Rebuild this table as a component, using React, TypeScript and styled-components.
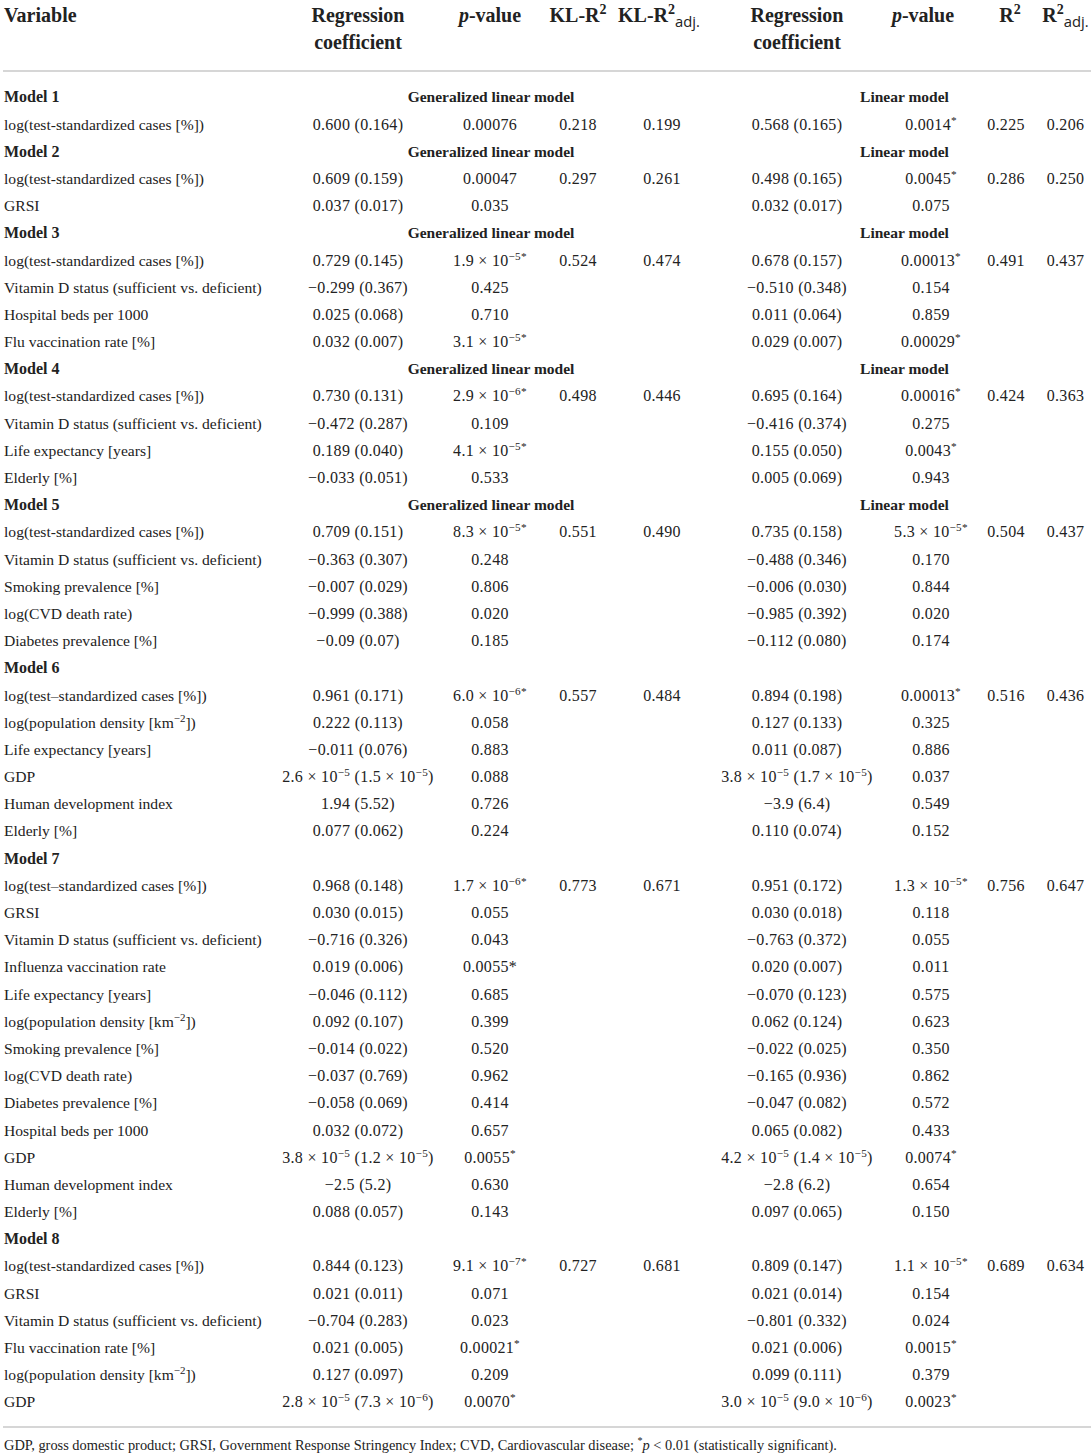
import React from "react"
import styled, { createGlobalStyle } from "styled-components"

const GlobalStyle = createGlobalStyle`
    html, body {
        margin: 0;
        padding: 0;
        background: #ffffff;
    }
`

const COLUMNS = "269px 172px 92px 84px 84px 186px 82px 68px 51px"
const SERIF = `"Liberation Serif", "Times New Roman", serif`

const Table = styled.div`
    width: 1091px;
    font-family: ${SERIF};
    color: #222222;
`

const HeaderRow = styled.div`
    display: grid;
    grid-template-columns: ${COLUMNS};
    padding-top: 2px;
    height: 72px;
    box-sizing: border-box;
    margin-left: 3px;
    border-bottom: 2px solid #d6d6d6;
`

// $nudge moves a centred heading sideways (px, negative = left)
const HeadCell = styled.div<{ $left?: boolean; $nudge?: number }>`
    font-size: 20px;
    font-weight: bold;
    line-height: 27px;
    white-space: nowrap;
    text-align: center;
    justify-self: ${(p) => (p.$left ? "start" : "center")};
    padding-left: ${(p) => (p.$left ? "1px" : "0")};
    margin-left: ${(p) => Math.max(0, (p.$nudge || 0) * 2)}px;
    margin-right: ${(p) => Math.max(0, -(p.$nudge || 0) * 2)}px;

    i {
        font-style: italic;
    }
`

const Sup = styled.sup`
    font-size: 0.7em;
    line-height: 0;
    vertical-align: 0.55em;
`

const Sub = styled.sub`
    font-family: "Open Sans", "DejaVu Sans", sans-serif;
    font-weight: normal;
    font-size: 0.74em;
    line-height: 0;
    vertical-align: -0.35em;
`

const Body = styled.div`
    padding: 11.8px 0 9.6px;
    border-bottom: 2px solid #d6d6d6;
    margin-left: 3px;
`

const Row = styled.div`
    display: grid;
    grid-template-columns: ${COLUMNS};
    height: 27.2px;
    align-items: center;
`

const NameCell = styled.div<{ $bold?: boolean }>`
    padding-left: 1px;
    white-space: nowrap;
    font-weight: ${(p) => (p.$bold ? "bold" : "normal")};
    font-size: ${(p) => (p.$bold ? "16px" : "15.6px")};
`

const ValueCell = styled.div`
    justify-self: center;
    white-space: nowrap;
    font-size: 16px;
    letter-spacing: 0.3px;
`

const SpanLabel = styled.div<{ $from: number; $to: number; $shift: number }>`
    grid-column: ${(p) => p.$from} / ${(p) => p.$to};
    padding-left: ${(p) => p.$shift}px;
    text-align: center;
    font-weight: bold;
    font-size: 15.5px;
    white-space: nowrap;
`

const Footnote = styled.div`
    padding: 8px 0 0 4px;
    font-family: ${SERIF};
    font-size: 14.4px;
    color: #222222;
    line-height: 18px;
`

// "^{...}" marks a superscript inside a value string
const fmt = (s?: string) => {
    if (!s) return null
    const parts = s.split(/\^\{([^}]*)\}/)
    return parts.map((part, i) =>
        i % 2 === 1 ? <Sup key={i}>{part}</Sup> : <React.Fragment key={i}>{part}</React.Fragment>
    )
}

type ModelRow = { model: string; labels?: boolean }
type VarRow = { name: string; v: (string | undefined)[] }
type Item = ModelRow | VarRow

const LOG = "log(test-standardized cases [%])"
const LOG2 = "log(test–standardized cases [%])"
const VITD = "Vitamin D status (sufficient vs. deficient)"
const DENS = "log(population density [km^{−2}])"

const rows: Item[] = [
    { model: "Model 1", labels: true },
    { name: LOG, v: ["0.600 (0.164)", "0.00076", "0.218", "0.199", "0.568 (0.165)", "0.0014^{*}", "0.225", "0.206"] },
    { model: "Model 2", labels: true },
    { name: LOG, v: ["0.609 (0.159)", "0.00047", "0.297", "0.261", "0.498 (0.165)", "0.0045^{*}", "0.286", "0.250"] },
    { name: "GRSI", v: ["0.037 (0.017)", "0.035", , , "0.032 (0.017)", "0.075"] },
    { model: "Model 3", labels: true },
    { name: LOG, v: ["0.729 (0.145)", "1.9 × 10^{−5*}", "0.524", "0.474", "0.678 (0.157)", "0.00013^{*}", "0.491", "0.437"] },
    { name: VITD, v: ["−0.299 (0.367)", "0.425", , , "−0.510 (0.348)", "0.154"] },
    { name: "Hospital beds per 1000", v: ["0.025 (0.068)", "0.710", , , "0.011 (0.064)", "0.859"] },
    { name: "Flu vaccination rate [%]", v: ["0.032 (0.007)", "3.1 × 10^{−5*}", , , "0.029 (0.007)", "0.00029^{*}"] },
    { model: "Model 4", labels: true },
    { name: LOG, v: ["0.730 (0.131)", "2.9 × 10^{−6*}", "0.498", "0.446", "0.695 (0.164)", "0.00016^{*}", "0.424", "0.363"] },
    { name: VITD, v: ["−0.472 (0.287)", "0.109", , , "−0.416 (0.374)", "0.275"] },
    { name: "Life expectancy [years]", v: ["0.189 (0.040)", "4.1 × 10^{−5*}", , , "0.155 (0.050)", "0.0043^{*}"] },
    { name: "Elderly [%]", v: ["−0.033 (0.051)", "0.533", , , "0.005 (0.069)", "0.943"] },
    { model: "Model 5", labels: true },
    { name: LOG, v: ["0.709 (0.151)", "8.3 × 10^{−5*}", "0.551", "0.490", "0.735 (0.158)", "5.3 × 10^{−5*}", "0.504", "0.437"] },
    { name: VITD, v: ["−0.363 (0.307)", "0.248", , , "−0.488 (0.346)", "0.170"] },
    { name: "Smoking prevalence [%]", v: ["−0.007 (0.029)", "0.806", , , "−0.006 (0.030)", "0.844"] },
    { name: "log(CVD death rate)", v: ["−0.999 (0.388)", "0.020", , , "−0.985 (0.392)", "0.020"] },
    { name: "Diabetes prevalence [%]", v: ["−0.09 (0.07)", "0.185", , , "−0.112 (0.080)", "0.174"] },
    { model: "Model 6" },
    { name: LOG2, v: ["0.961 (0.171)", "6.0 × 10^{−6*}", "0.557", "0.484", "0.894 (0.198)", "0.00013^{*}", "0.516", "0.436"] },
    { name: DENS, v: ["0.222 (0.113)", "0.058", , , "0.127 (0.133)", "0.325"] },
    { name: "Life expectancy [years]", v: ["−0.011 (0.076)", "0.883", , , "0.011 (0.087)", "0.886"] },
    { name: "GDP", v: ["2.6 × 10^{−5} (1.5 × 10^{−5})", "0.088", , , "3.8 × 10^{−5} (1.7 × 10^{−5})", "0.037"] },
    { name: "Human development index", v: ["1.94 (5.52)", "0.726", , , "−3.9 (6.4)", "0.549"] },
    { name: "Elderly [%]", v: ["0.077 (0.062)", "0.224", , , "0.110 (0.074)", "0.152"] },
    { model: "Model 7" },
    { name: LOG2, v: ["0.968 (0.148)", "1.7 × 10^{−6*}", "0.773", "0.671", "0.951 (0.172)", "1.3 × 10^{−5*}", "0.756", "0.647"] },
    { name: "GRSI", v: ["0.030 (0.015)", "0.055", , , "0.030 (0.018)", "0.118"] },
    { name: VITD, v: ["−0.716 (0.326)", "0.043", , , "−0.763 (0.372)", "0.055"] },
    { name: "Influenza vaccination rate", v: ["0.019 (0.006)", "0.0055*", , , "0.020 (0.007)", "0.011"] },
    { name: "Life expectancy [years]", v: ["−0.046 (0.112)", "0.685", , , "−0.070 (0.123)", "0.575"] },
    { name: DENS, v: ["0.092 (0.107)", "0.399", , , "0.062 (0.124)", "0.623"] },
    { name: "Smoking prevalence [%]", v: ["−0.014 (0.022)", "0.520", , , "−0.022 (0.025)", "0.350"] },
    { name: "log(CVD death rate)", v: ["−0.037 (0.769)", "0.962", , , "−0.165 (0.936)", "0.862"] },
    { name: "Diabetes prevalence [%]", v: ["−0.058 (0.069)", "0.414", , , "−0.047 (0.082)", "0.572"] },
    { name: "Hospital beds per 1000", v: ["0.032 (0.072)", "0.657", , , "0.065 (0.082)", "0.433"] },
    { name: "GDP", v: ["3.8 × 10^{−5} (1.2 × 10^{−5})", "0.0055^{*}", , , "4.2 × 10^{−5} (1.4 × 10^{−5})", "0.0074^{*}"] },
    { name: "Human development index", v: ["−2.5 (5.2)", "0.630", , , "−2.8 (6.2)", "0.654"] },
    { name: "Elderly [%]", v: ["0.088 (0.057)", "0.143", , , "0.097 (0.065)", "0.150"] },
    { model: "Model 8" },
    { name: LOG, v: ["0.844 (0.123)", "9.1 × 10^{−7*}", "0.727", "0.681", "0.809 (0.147)", "1.1 × 10^{−5*}", "0.689", "0.634"] },
    { name: "GRSI", v: ["0.021 (0.011)", "0.071", , , "0.021 (0.014)", "0.154"] },
    { name: VITD, v: ["−0.704 (0.283)", "0.023", , , "−0.801 (0.332)", "0.024"] },
    { name: "Flu vaccination rate [%]", v: ["0.021 (0.005)", "0.00021^{*}", , , "0.021 (0.006)", "0.0015^{*}"] },
    { name: DENS, v: ["0.127 (0.097)", "0.209", , , "0.099 (0.111)", "0.379"] },
    { name: "GDP", v: ["2.8 × 10^{−5} (7.3 × 10^{−6})", "0.0070^{*}", , , "3.0 × 10^{−5} (9.0 × 10^{−6})", "0.0023^{*}"] },
]

const App: React.FC = () => {
    return (
        <>
            <GlobalStyle />
            <Table>
                <HeaderRow>
                    <HeadCell $left>Variable</HeadCell>
                    <HeadCell>
                        Regression
                        <br />
                        coefficient
                    </HeadCell>
                    <HeadCell>
                        <i>p</i>-value
                    </HeadCell>
                    <HeadCell>
                        KL-R<Sup>2</Sup>
                    </HeadCell>
                    <HeadCell $nudge={-3}>
                        KL-R<Sup>2</Sup>
                        <Sub>adj.</Sub>
                    </HeadCell>
                    <HeadCell>
                        Regression
                        <br />
                        coefficient
                    </HeadCell>
                    <HeadCell $nudge={-8}>
                        <i>p</i>-value
                    </HeadCell>
                    <HeadCell $nudge={4}>
                        R<Sup>2</Sup>
                    </HeadCell>
                    <HeadCell>
                        R<Sup>2</Sup>
                        <Sub>adj.</Sub>
                    </HeadCell>
                </HeaderRow>
                <Body>
                    {rows.map((r, i) =>
                        "model" in r ? (
                            <Row key={i}>
                                <NameCell $bold>{r.model}</NameCell>
                                {r.labels && (
                                    <>
                                        <SpanLabel $from={2} $to={6} $shift={6}>
                                            Generalized linear model
                                        </SpanLabel>
                                        <SpanLabel $from={6} $to={10} $shift={14}>
                                            Linear model
                                        </SpanLabel>
                                    </>
                                )}
                            </Row>
                        ) : (
                            <Row key={i}>
                                <NameCell>{fmt(r.name)}</NameCell>
                                {Array.from({ length: 8 }).map((_, j) => (
                                    <ValueCell key={j}>{fmt(r.v[j])}</ValueCell>
                                ))}
                            </Row>
                        )
                    )}
                </Body>
                <Footnote>
                    GDP, gross domestic product; GRSI, Government Response Stringency Index; CVD,
                    Cardiovascular disease; <Sup>*</Sup>
                    <i>p</i> &lt; 0.01 (statistically significant).
                </Footnote>
            </Table>
        </>
    )
}

export default App
